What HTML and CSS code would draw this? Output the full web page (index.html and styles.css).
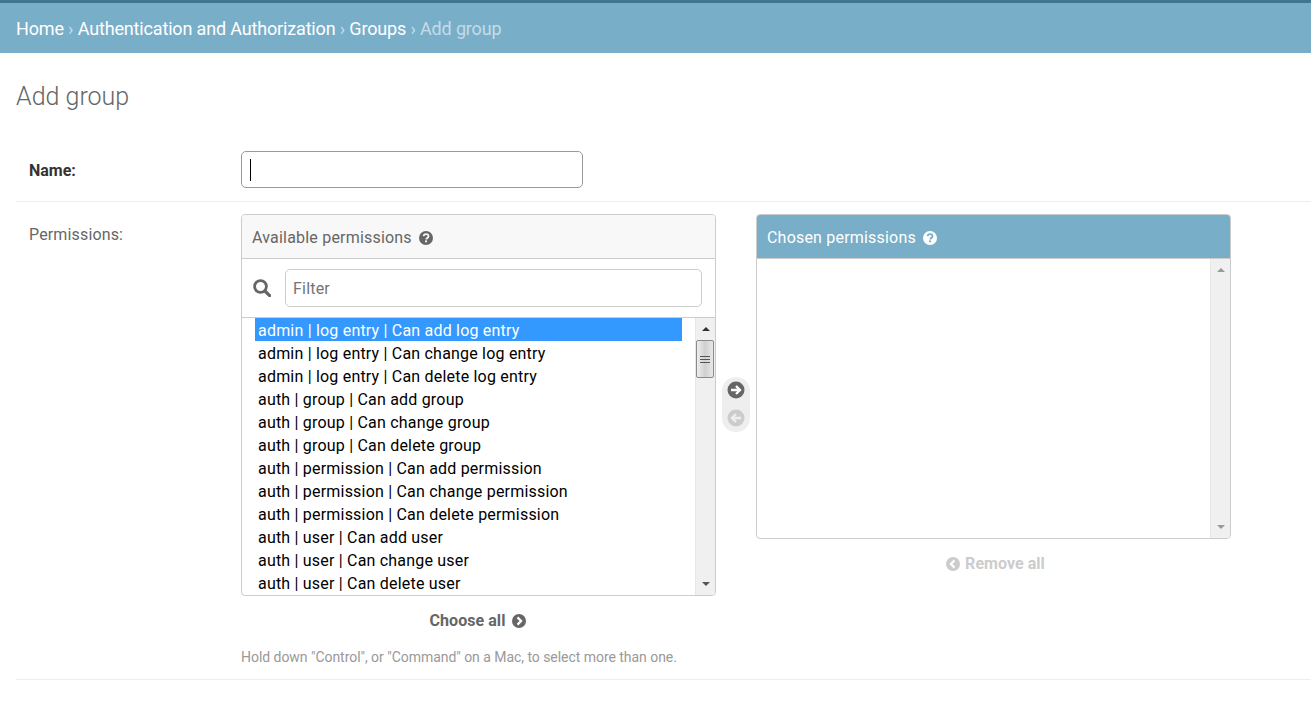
FILE: index.html
```html
<!DOCTYPE html>
<html lang="en">
<head>
    <meta charset="UTF-8">
    <title>Add group</title>
    <link rel="stylesheet" href="styles.css">
</head>
<body>
    <div class="breadcrumbs">
        <a>Home</a> <span class="sep">›</span> <a>Authentication and Authorization</a> <span class="sep">›</span> <a>Groups</a> <span class="sep">›</span> Add group
    </div>

    <div class="content">
        <h1>Add group</h1>

        <div class="form_row name_row">
            <label class="row_label required">Name:</label>
            <div class="name_input"><span class="caret"></span></div>
        </div>

        <div class="form_row perm_row">
            <label class="row_label">Permissions:</label>
            <div class="perm_field">
                <div class="selector">
                    <div class="selector_col">
                        <div class="box">
                            <div class="box_title">
                                Available permissions
                                <svg class="help" viewBox="0 0 16 16"><circle cx="8" cy="8" r="7" fill="currentColor"/><path d="M5.6 6.2C5.8 4.9 6.8 4.2 8.1 4.2c1.4 0 2.4.8 2.4 2 0 1-.6 1.5-1.3 1.9-.6.4-.8.6-.8 1.1v.2" fill="none" stroke="var(--glyph)" stroke-width="1.8"/><rect x="7.1" y="10.4" width="1.9" height="1.9" fill="var(--glyph)"/></svg>
                            </div>
                            <div class="filter_bar">
                                <svg class="search" viewBox="0 0 18 18"><circle cx="7.5" cy="7.5" r="5.9" fill="none" stroke="#666" stroke-width="2.8"/><path d="M12 12l4.6 4.6" stroke="#666" stroke-width="3.2" stroke-linecap="round"/></svg>
                                <div class="filter_input">Filter</div>
                            </div>
                            <div class="list_wrap avail_list">
                                <ul class="perm_list">
                                    <li class="selected">admin | log entry | Can add log entry</li>
                                    <li>admin | log entry | Can change log entry</li>
                                    <li>admin | log entry | Can delete log entry</li>
                                    <li>auth | group | Can add group</li>
                                    <li>auth | group | Can change group</li>
                                    <li>auth | group | Can delete group</li>
                                    <li>auth | permission | Can add permission</li>
                                    <li>auth | permission | Can change permission</li>
                                    <li>auth | permission | Can delete permission</li>
                                    <li>auth | user | Can add user</li>
                                    <li>auth | user | Can change user</li>
                                    <li>auth | user | Can delete user</li>
                                </ul>
                                <div class="scrollbar">
                                    <span class="arrow up"></span>
                                    <div class="track">
                                        <div class="thumb"><i></i><i></i><i></i></div>
                                    </div>
                                    <span class="arrow down"></span>
                                </div>
                            </div>
                        </div>
                        <div class="select_all">
                            Choose all
                            <svg class="circle_icon small" viewBox="0 0 16 16"><circle cx="8" cy="8" r="7" fill="#666"/><path d="M6.5 4.4L10.1 8l-3.6 3.6" fill="none" stroke="#fff" stroke-width="2.2"/></svg>
                        </div>
                    </div>

                    <div class="mover">
                        <svg class="circle_icon" viewBox="0 0 18 18"><circle cx="9" cy="9" r="8.5" fill="#666"/><path d="M4 9h8.6M9 5l4 4-4 4" fill="none" stroke="#fff" stroke-width="2.3"/></svg>
                        <svg class="circle_icon" viewBox="0 0 18 18"><circle cx="9" cy="9" r="8.5" fill="#ccc"/><path d="M14 9H5.4M9 5L5 9l4 4" fill="none" stroke="#eee" stroke-width="2.3"/></svg>
                    </div>

                    <div class="selector_col">
                        <div class="box chosen">
                            <div class="box_title">
                                Chosen permissions
                                <svg class="help" viewBox="0 0 16 16"><circle cx="8" cy="8" r="7" fill="currentColor"/><path d="M5.6 6.2C5.8 4.9 6.8 4.2 8.1 4.2c1.4 0 2.4.8 2.4 2 0 1-.6 1.5-1.3 1.9-.6.4-.8.6-.8 1.1v.2" fill="none" stroke="var(--glyph)" stroke-width="1.8"/><rect x="7.1" y="10.4" width="1.9" height="1.9" fill="var(--glyph)"/></svg>
                            </div>
                            <div class="list_wrap chosen_list">
                                <ul class="perm_list"></ul>
                                <div class="scrollbar disabled">
                                    <span class="arrow up"></span>
                                    <div class="track"></div>
                                    <span class="arrow down"></span>
                                </div>
                            </div>
                        </div>
                        <div class="select_all muted">
                            <svg class="circle_icon small" viewBox="0 0 16 16"><circle cx="8" cy="8" r="7" fill="#ccc"/><path d="M9.5 4.4L5.9 8l3.6 3.6" fill="none" stroke="#fff" stroke-width="2.2"/></svg>
                            Remove all
                        </div>
                    </div>
                </div>
                <div class="help_text">Hold down "Control", or "Command" on a Mac, to select more than one.</div>
            </div>
        </div>
    </div>
</body>
</html>
```

FILE: styles.css
```css
html, body {
    margin: 0;
    padding: 0;
}
body {
    font-family: Roboto, "Liberation Sans", sans-serif;
    font-size: 16px;
    color: #333;
    background: #fff;
}
.breadcrumbs {
    box-sizing: border-box;
    height: 53px;
    padding: 15px 16px 0;
    background: #79aec8;
    border-top: 3px solid #417690;
    color: #c4dce8;
    font-size: 18px;
    line-height: 21px;
    letter-spacing: -0.16px;
}
.breadcrumbs a {
    color: #fff;
}
.breadcrumbs .sep {
    color: #c4dce8;
}
.content {
    padding: 0 0 0 16px;
}
h1 {
    margin: 0;
    padding: 29px 0 0;
    font-size: 25px;
    line-height: 30px;
    font-weight: 300;
    color: #666;
}
.form_row {
    display: flex;
    border-bottom: 1px solid #eee;
}
.row_label {
    box-sizing: border-box;
    width: 225px;
    padding-left: 13px;
    color: #666;
    font-size: 16px;
    line-height: 19px;
    letter-spacing: 0.15px;
}
.row_label.required {
    color: #333;
    font-weight: 700;
    letter-spacing: 0;
}
.name_row {
    margin-top: 39px;
    height: 51px;
    box-sizing: border-box;
}
.name_row .row_label {
    padding-top: 10px;
}
.name_input {
    box-sizing: border-box;
    width: 342px;
    height: 37px;
    border: 1px solid #999;
    border-radius: 5px;
    padding: 7px 8px;
}
.caret {
    display: block;
    width: 1px;
    height: 22px;
    background: #000;
}
.perm_row {
    padding-top: 12px;
    height: 478px;
    box-sizing: border-box;
}
.perm_row .row_label {
    padding-top: 11px;
}
.selector {
    display: flex;
}
.selector_col {
    width: 475px;
}
.box {
    box-sizing: border-box;
    height: 382px;
    border: 1px solid #ccc;
    border-radius: 4px;
    overflow: hidden;
    display: flex;
    flex-direction: column;
}
.box.chosen {
    height: 325px;
}
.box_title {
    --glyph: #f8f8f8;
    box-sizing: border-box;
    height: 44px;
    flex: none;
    display: flex;
    align-items: center;
    gap: 6px;
    padding: 2px 0 0 10px;
    background: #f8f8f8;
    border-bottom: 1px solid #ccc;
    color: #666;
    font-size: 16px;
    letter-spacing: 0.2px;
}
.chosen .box_title {
    --glyph: #79aec8;
    background: #79aec8;
    color: #fff;
}
.help {
    width: 16px;
    height: 16px;
}
.filter_bar {
    box-sizing: border-box;
    height: 59px;
    flex: none;
    display: flex;
    align-items: center;
    padding: 0 13px 0 11px;
    border-bottom: 1px solid #ccc;
}
.search {
    width: 18px;
    height: 18px;
    margin-right: 14px;
    flex: none;
}
.filter_input {
    box-sizing: border-box;
    flex: 1;
    height: 38px;
    border: 1px solid #ccc;
    border-radius: 5px;
    padding: 0 7px;
    line-height: 38px;
    color: #757575;
    letter-spacing: 0.2px;
}
.list_wrap {
    flex: 1;
    display: flex;
    min-height: 0;
}
.perm_list {
    flex: 1;
    margin: 0;
    padding: 0 13px;
    list-style: none;
    overflow: hidden;
}
.perm_list li {
    height: 23px;
    line-height: 25px;
    padding-left: 3px;
    color: #000;
    white-space: nowrap;
    letter-spacing: 0.2px;
}
.perm_list li.selected {
    background: #3399ff;
    color: #fff;
}
.scrollbar {
    width: 20px;
    flex: none;
    display: flex;
    flex-direction: column;
    background: #f0f0f0;
    border-left: 1px solid #e6e6e6;
    box-sizing: border-box;
}
.arrow {
    flex: none;
    height: 22px;
    display: flex;
    align-items: center;
    justify-content: center;
}
.arrow::after {
    content: "";
    border-left: 4px solid transparent;
    border-right: 4px solid transparent;
}
.arrow.up::after {
    border-bottom: 4px solid #333;
}
.arrow.down::after {
    border-top: 4px solid #555;
}
.disabled .arrow.up::after {
    border-bottom-color: #999;
}
.disabled .arrow.down::after {
    border-top-color: #999;
}
.track {
    flex: 1;
}
.thumb {
    box-sizing: border-box;
    width: 18px;
    height: 38px;
    border: 1px solid #8a8a8a;
    border-radius: 2px;
    background: linear-gradient(to right, #eee, #d0d0d0 50%, #e8e8e8);
    display: flex;
    flex-direction: column;
    align-items: center;
    justify-content: center;
    gap: 2px;
}
.thumb i {
    display: block;
    width: 10px;
    height: 1px;
    background: #555;
}
.select_all {
    display: flex;
    align-items: center;
    justify-content: center;
    gap: 6px;
    margin-top: 15px;
    height: 19px;
    font-weight: 700;
    color: #666;
    letter-spacing: 0.05px;
}
.select_all.muted {
    color: #ccc;
    gap: 4px;
    padding-left: 3px;
}
.circle_icon {
    width: 18px;
    height: 18px;
    display: block;
}
.circle_icon.small {
    width: 16px;
    height: 16px;
}
.mover {
    box-sizing: border-box;
    width: 28px;
    height: 55px;
    margin: 163px 6px 0;
    padding: 4px 5px;
    background: #eee;
    border-radius: 14px;
    display: flex;
    flex-direction: column;
    gap: 10px;
}
.help_text {
    margin-top: 19px;
    font-size: 14px;
    line-height: 16px;
    color: #999;
    letter-spacing: -0.04px;
}
```
